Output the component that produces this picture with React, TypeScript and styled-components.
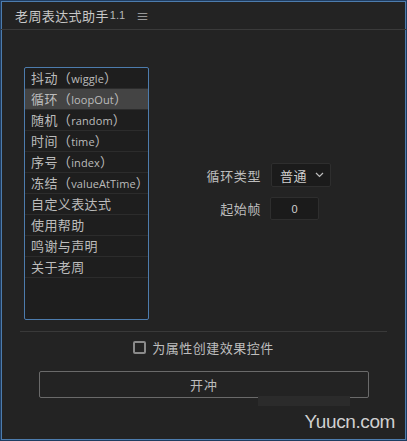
import React from "react";
import styled, { createGlobalStyle } from "styled-components";

const Global = createGlobalStyle`
  html, body { margin: 0; padding: 0; background: #232323; }
  * { box-sizing: border-box; }
`;

const Window = styled.div`
  position: relative;
  width: 407px;
  height: 441px;
  background: #232323;
  border: 1px solid #1f3d62;
  box-shadow: inset 0 0 0 1px #4d7cad;
  font-family: "Noto Sans CJK SC", "Noto Sans", sans-serif;
  color: #bdbdbd;
  display: flex;
  flex-direction: column;
  overflow: hidden;
`;

const Header = styled.div`
  height: 29px;
  display: flex;
  align-items: center;
  padding: 0 0 0 14px;
  border-bottom: 1px solid #3a3a3a;
  font-size: 13px;
  letter-spacing: 0.4px;
  color: #c8c8c8;
`;

const Version = styled.span`
  font-family: "Liberation Sans", sans-serif;
  font-size: 11px;
  margin-left: 1px;
  letter-spacing: 0;
  color: #b8b8b8;
`;

const Menu = styled.span`
  font-size: 13px;
  color: #b0b0b0;
  margin-left: 11px;
`;

const Body = styled.div`
  display: flex;
  padding: 37px 0 0 23px;
`;

const ListBox = styled.div`
  width: 125px;
  height: 253px;
  border: 1px solid #4d7cad;
  border-radius: 2px;
  background: #1e1e1e;
  display: flex;
  flex-direction: column;
`;

const Row = styled.div<{ $active?: boolean }>`
  height: 21px;
  line-height: 20px;
  padding-left: 6px;
  font-size: 13px;
  letter-spacing: 0.4px;
  border-bottom: 1px solid #2c2c2c;
  background: ${(p) => (p.$active ? "#444444" : "transparent")};
  color: #bcbcbc;
  white-space: nowrap;
  overflow: hidden;
`;

const Latin = styled.span`
  font-family: "Open Sans", sans-serif;
  font-size: 11px;
  letter-spacing: 0.1px;
`;

const Form = styled.div`
  display: grid;
  grid-template-columns: 62px auto;
  column-gap: 10px;
  row-gap: 10px;
  align-content: start;
  margin: 96px 0 0 50px;
`;

const Label = styled.div`
  font-size: 13px;
  letter-spacing: 0.6px;
  text-align: right;
  align-self: center;
  color: #bdbdbd;
`;

const Select = styled.div`
  width: 60px;
  height: 24px;
  border: 1px solid #2e2e2e;
  border-radius: 2px;
  background: #1b1b1b;
  display: flex;
  align-items: center;
  justify-content: space-between;
  padding: 0 6px 0 8px;
  font-size: 13px;
  letter-spacing: 0.6px;
  color: #cfcfcf;
`;

const Input = styled.div`
  width: 49px;
  height: 23px;
  margin-left: -1px;
  border: 1px solid #2e2e2e;
  border-radius: 2px;
  background: #1b1b1b;
  display: flex;
  align-items: center;
  justify-content: center;
  font-family: "Liberation Sans", sans-serif;
  font-size: 11px;
  color: #d0d0d0;
`;

const Divider = styled.div`
  margin: 11px 19px 0 19px;
  height: 1px;
  background: #393939;
`;

const CheckRow = styled.div`
  display: flex;
  justify-content: center;
  align-items: center;
  gap: 6px;
  margin-top: 6px;
  font-size: 13px;
  letter-spacing: 0.5px;
  color: #bdbdbd;
`;

const Box = styled.span`
  width: 13px;
  height: 13px;
  border: 2px solid #8a8a8a;
  border-radius: 2px;
`;

const Button = styled.div`
  margin: 14px 0 0 38px;
  width: 330px;
  height: 27px;
  border: 1px solid #6a6a6a;
  border-radius: 2px;
  display: flex;
  align-items: center;
  justify-content: center;
  font-size: 13px;
  letter-spacing: 1px;
  color: #bdbdbd;
`;

const Watermark = styled.div`
  position: absolute;
  right: 11px;
  bottom: 7px;
  font-family: "Liberation Sans", sans-serif;
  font-size: 19px;
  color: #d0d0d0;
  letter-spacing: -0.4px;
`;

const WaterShade = styled.div`
  position: absolute;
  left: 257px;
  top: 395px;
  width: 92px;
  height: 10px;
  background: #2b2b2b;
`;

const items: [string, string | null][] = [
  ["抖动", "wiggle"],
  ["循环", "loopOut"],
  ["随机", "random"],
  ["时间", "time"],
  ["序号", "index"],
  ["冻结", "valueAtTime"],
  ["自定义表达式", null],
  ["使用帮助", null],
  ["鸣谢与声明", null],
  ["关于老周", null],
];

export default function App() {
  return (
    <>
      <Global />
      <Window>
        <Header>
          <span>老周表达式助手</span>
          <Version>1.1</Version>
          <Menu>≡</Menu>
        </Header>
        <Body>
          <ListBox>
            {items.map(([zh, en], i) => (
              <Row key={i} $active={i === 1}>
                {zh}
                {en && (
                  <>
                    （<Latin>{en}</Latin>）
                  </>
                )}
              </Row>
            ))}
          </ListBox>
          <Form>
            <Label>循环类型</Label>
            <Select>
              <span>普通</span>
              <svg width="9" height="6" viewBox="0 0 9 6">
                <path d="M1 1 L4.5 4.5 L8 1" stroke="#bdbdbd" strokeWidth="1.2" fill="none" />
              </svg>
            </Select>
            <Label>起始帧</Label>
            <Input>0</Input>
          </Form>
        </Body>
        <Divider />
        <CheckRow>
          <Box />
          <span>为属性创建效果控件</span>
        </CheckRow>
        <Button>开冲</Button>
        <WaterShade />
        <Watermark>Yuucn.com</Watermark>
      </Window>
    </>
  );
}
